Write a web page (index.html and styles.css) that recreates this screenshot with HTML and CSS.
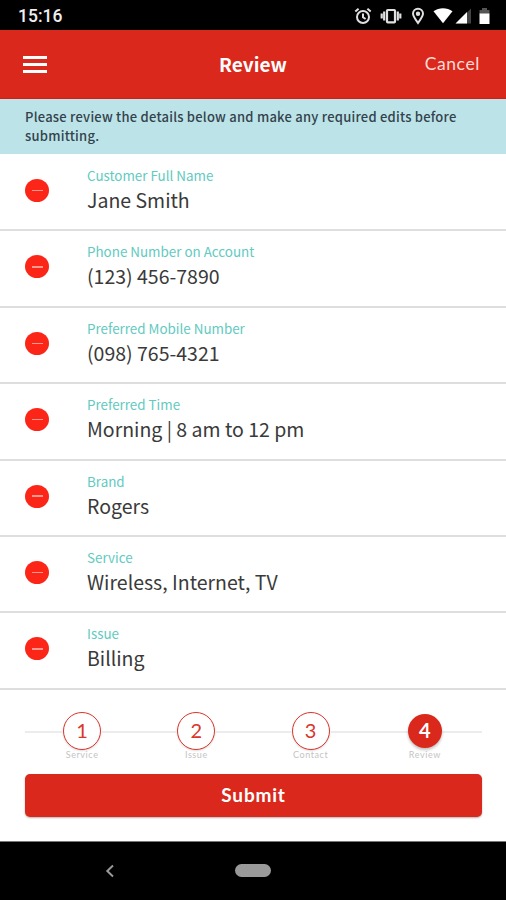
FILE: index.html
```html
<!DOCTYPE html>
<html lang="en">
<head>
    <meta charset="UTF-8">
    <meta name="viewport" content="width=device-width, initial-scale=1.0">
    <title>Review</title>
    <link rel="stylesheet" href="styles.css">
</head>
<body>
    <div class="status-bar">
        <span class="clock">15:16</span>
        <div class="status-icons">
            <svg class="alarm" width="18" height="18" viewBox="0 0 18 18" fill="none" stroke="#e0e0e0" stroke-width="2">
                <circle cx="9" cy="10" r="6"/>
                <path d="M9 6.5V10.2L11.6 12M1.3 4.6L4.6 1.8M16.7 4.6L13.4 1.8"/>
            </svg>
            <svg class="vibrate" width="22" height="18" viewBox="0 0 22 18" fill="none" stroke="#e0e0e0" stroke-width="2.2">
                <rect x="7" y="3" width="8" height="12.4" rx="0.8"/>
                <path d="M4.2 4.5V13.5M17.8 4.5V13.5M1.7 6.5V11.5M20.3 6.5V11.5"/>
            </svg>
            <svg class="pin" width="14" height="18" viewBox="0 0 14 18" fill="none" stroke="#e0e0e0" stroke-width="2">
                <path d="M7 16C4.2 12.2 2 9.3 2 6.8A5 5 0 0 1 12 6.8C12 9.3 9.8 12.2 7 16Z"/>
                <circle cx="7" cy="6.8" r="1.2" fill="#e0e0e0"/>
            </svg>
            <svg class="wifi" width="20" height="18" viewBox="0 0 20 18">
                <path d="M0.5 4.2C6 0.2 14 0.2 19.5 4.2L10 16.2Z" fill="#fff"/>
            </svg>
            <svg class="signal" width="17" height="18" viewBox="0 0 17 18">
                <path d="M16 1.5V16.5H1Z" fill="#444"/>
                <path d="M12 5V16.5H0.5Z" fill="#fff"/>
            </svg>
            <svg class="battery" width="11" height="18" viewBox="0 0 11 18">
                <path d="M3 1H8V3H10.5V7H0.5V3H3Z" fill="#555"/>
                <path d="M0.5 6.5H10.5V17H0.5Z" fill="#fff"/>
            </svg>
        </div>
    </div>

    <header class="header">
        <div class="menu">
            <span></span>
            <span></span>
            <span></span>
        </div>
        <h1>Review</h1>
        <a class="cancel">Cancel</a>
    </header>

    <p class="notice">Please review the details below and make any required edits before submitting.</p>

    <div class="details">
        <div class="row">
            <div class="remove"></div>
            <div class="field">
                <div class="label">Customer Full Name</div>
                <div class="value">Jane Smith</div>
            </div>
        </div>
        <div class="row">
            <div class="remove"></div>
            <div class="field">
                <div class="label">Phone Number on Account</div>
                <div class="value">(123) 456-7890</div>
            </div>
        </div>
        <div class="row">
            <div class="remove"></div>
            <div class="field">
                <div class="label">Preferred Mobile Number</div>
                <div class="value">(098) 765-4321</div>
            </div>
        </div>
        <div class="row">
            <div class="remove"></div>
            <div class="field">
                <div class="label">Preferred Time</div>
                <div class="value">Morning | 8 am to 12 pm</div>
            </div>
        </div>
        <div class="row">
            <div class="remove"></div>
            <div class="field">
                <div class="label">Brand</div>
                <div class="value">Rogers</div>
            </div>
        </div>
        <div class="row">
            <div class="remove"></div>
            <div class="field">
                <div class="label">Service</div>
                <div class="value">Wireless, Internet, TV</div>
            </div>
        </div>
        <div class="row">
            <div class="remove"></div>
            <div class="field">
                <div class="label">Issue</div>
                <div class="value">Billing</div>
            </div>
        </div>
    </div>

    <div class="footer">
        <div class="steps">
            <div class="step">
                <div class="circle">1</div>
                <div class="step-name">Service</div>
            </div>
            <div class="step">
                <div class="circle">2</div>
                <div class="step-name">Issue</div>
            </div>
            <div class="step">
                <div class="circle">3</div>
                <div class="step-name">Contact</div>
            </div>
            <div class="step active">
                <div class="circle">4</div>
                <div class="step-name">Review</div>
            </div>
        </div>
        <button class="submit">Submit</button>
    </div>

    <div class="nav-bar">
        <svg class="back" width="10" height="14" viewBox="0 0 10 14" fill="none" stroke="#999" stroke-width="2">
            <path d="M8 1.5L2.3 7L8 12.5"/>
        </svg>
        <div class="home"></div>
    </div>
</body>
</html>
```

FILE: styles.css
```css
* {
    box-sizing: border-box;
}

body {
    font-family: "Noto Sans CJK SC", sans-serif;
    margin: 0;
    height: 900px;
    display: flex;
    flex-direction: column;
    background-color: #fff;
    overflow: hidden;
}

.status-bar {
    height: 30px;
    padding: 1px 16px 0 18px;
    display: flex;
    justify-content: space-between;
    align-items: center;
    background-color: #000;
}

.clock {
    font-family: Roboto, sans-serif;
    font-size: 17.5px;
    font-weight: 500;
    line-height: 28px;
    color: #eee;
}

.status-icons {
    display: flex;
    align-items: center;
}

.vibrate {
    margin-left: 8px;
}

.pin {
    margin-left: 9px;
}

.wifi {
    margin-left: 8px;
}

.signal {
    margin-left: 2px;
}

.battery {
    margin-left: 7px;
}

.header {
    height: 69px;
    padding: 0 26px 0 23px;
    display: grid;
    grid-template-columns: 1fr auto 1fr;
    align-items: center;
    background-color: #da291c;
    border-bottom: 1px solid #cf2015;
    color: #fff;
}

.menu {
    width: 24px;
    display: flex;
    flex-direction: column;
    gap: 4px;
}

.menu span {
    height: 3px;
    background-color: #fff;
}

.header h1 {
    margin: 0 0 0 3px;
    font-size: 19px;
    font-weight: bold;
    line-height: 28px;
}

.cancel {
    justify-self: end;
    font-family: Lato, sans-serif;
    font-size: 17.5px;
    letter-spacing: 0.6px;
    line-height: 24px;
    margin-bottom: 1px;
    color: #fddbd7;
}

.notice {
    height: 55px;
    margin: 0;
    padding: 8px 25px 0;
    font-size: 13px;
    font-weight: 500;
    letter-spacing: 0.23px;
    line-height: 19px;
    background-color: #bce4e8;
    color: #34424c;
}

.details {
    padding-top: 1px;
}

.row {
    height: 76.4px;
    padding: 11px 25px 0;
    display: flex;
    border-bottom: 2px solid #dedede;
}

.remove {
    width: 24px;
    height: 23px;
    margin: 13px 38px 0 0;
    display: flex;
    justify-content: center;
    align-items: center;
    border-radius: 50%;
    background-color: #fb2617;
}

.remove::before {
    content: "";
    width: 11px;
    height: 1.5px;
    background-color: #ff988e;
}

.label {
    font-size: 13.4px;
    line-height: 19px;
    color: #62cabf;
}

.value {
    font-size: 19.5px;
    line-height: 29px;
    color: #3a3a3a;
}

.footer {
    height: 152px;
    padding: 22px 24px 0 25px;
    border-bottom: 1px solid #777;
}

.steps {
    height: 62px;
    display: flex;
    background: linear-gradient(#ececec, #ececec) 0 19px / 100% 2px no-repeat;
}

.step {
    flex: 1;
    display: flex;
    flex-direction: column;
    align-items: center;
}

.circle {
    width: 38px;
    height: 38px;
    border: 1.5px solid #d9362c;
    border-radius: 50%;
    font-family: Lato, sans-serif;
    font-size: 20px;
    line-height: 34px;
    text-align: center;
    background-color: #fff;
    box-shadow: 0 1px 2px rgba(0, 0, 0, 0.15), 0 0 0 1px #fff;
    color: #d9362c;
}

.active .circle {
    width: 34px;
    height: 34px;
    margin: 2px 0;
    border: none;
    font-weight: bold;
    line-height: 32px;
    background-color: #da291c;
    box-shadow: 0 2px 3px rgba(0, 0, 0, 0.25);
    color: #fff;
}

.step-name {
    font-family: Lato, sans-serif;
    font-size: 9px;
    letter-spacing: 0.6px;
    line-height: 10px;
    color: #c4c4c4;
}

.submit {
    display: block;
    width: 100%;
    height: 43px;
    padding: 0 0 2px;
    border: none;
    border-radius: 5px;
    font-family: Lato, sans-serif;
    font-size: 19px;
    font-weight: bold;
    letter-spacing: 0.8px;
    background-color: #da291c;
    box-shadow: 0 1px 2px rgba(0, 0, 0, 0.3);
    color: #fff;
}

.nav-bar {
    flex: 1;
    display: grid;
    grid-template-columns: 1fr auto 1fr;
    align-items: center;
    background-color: #000;
}

.back {
    margin-left: 105px;
}

.home {
    width: 36px;
    height: 13px;
    border-radius: 7px;
    background-color: #999;
}
```
